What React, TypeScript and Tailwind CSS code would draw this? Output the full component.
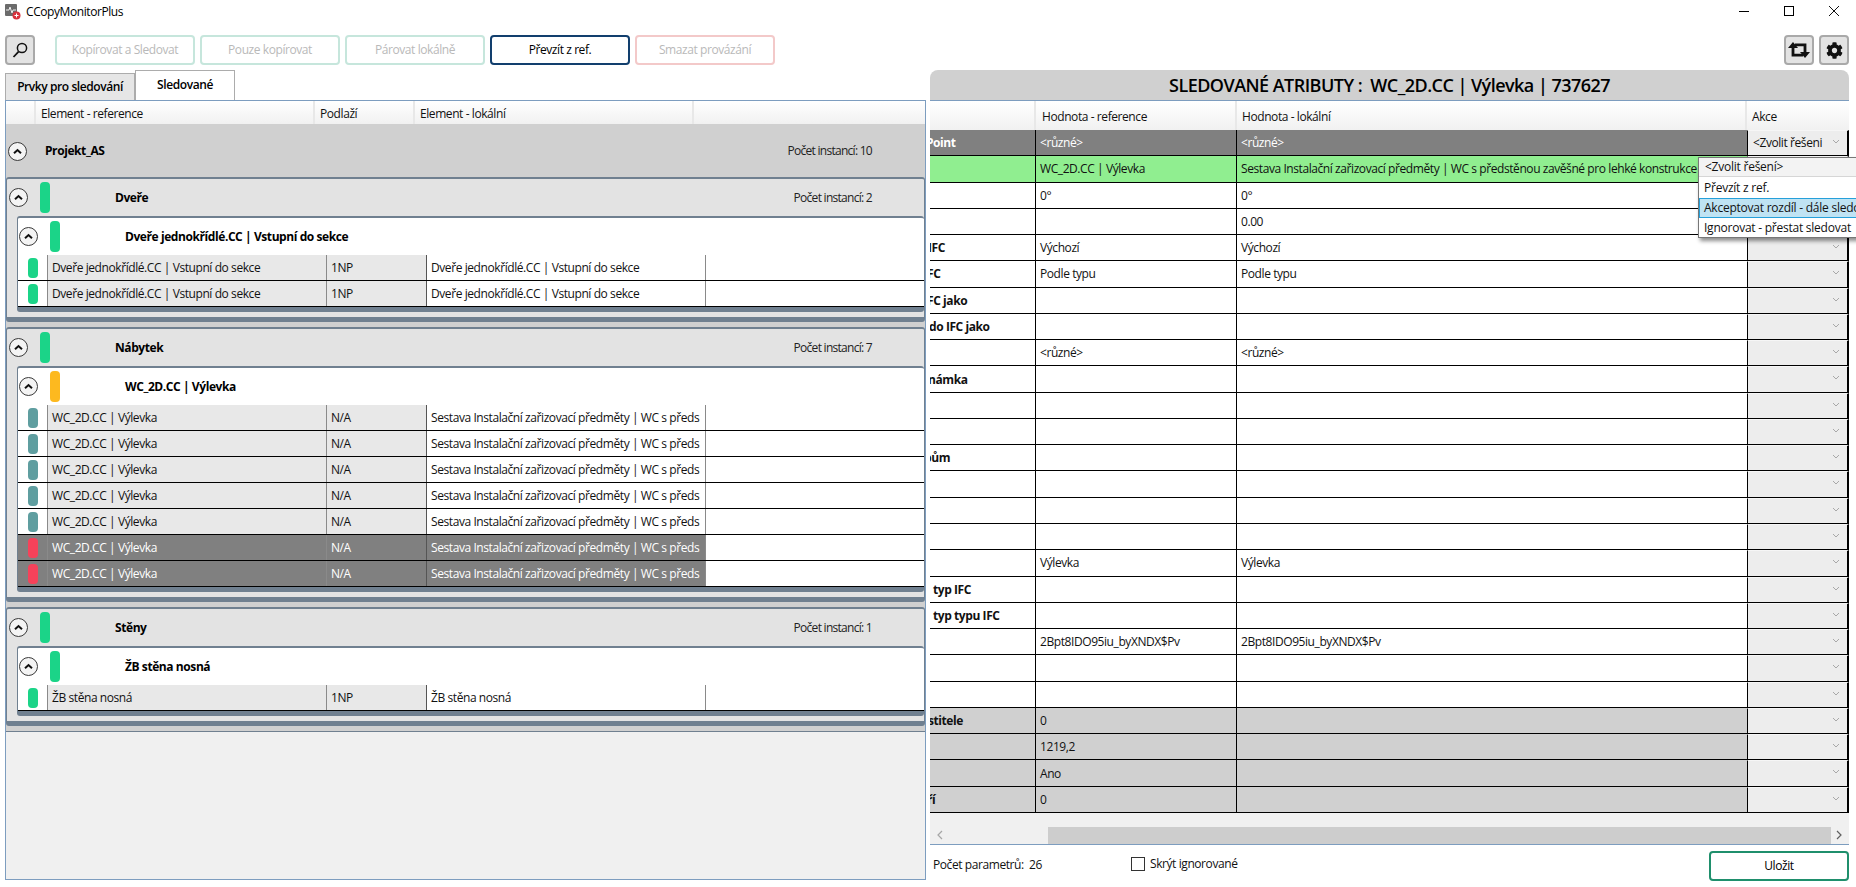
import { FaCog } from "react-icons/fa";

function CircleToggle() {
  return (
    <span className="flex h-[19px] w-[19px] shrink-0 items-center justify-center rounded-full border border-[#3a3a3a] bg-[#f4f4f4]">
      <svg width="9" height="7" viewBox="0 0 9 7">
        <path d="M1 5.2 L4.5 2 L8 5.2" fill="none" stroke="#111" strokeWidth="2" />
      </svg>
    </span>
  );
}

function Pill({ color, big }: { color: string; big?: boolean }) {
  return <span className={`block w-[10px] rounded-[4px] ${big ? "h-[31px]" : "h-[20px]"} ${color}`} />;
}

const GREEN = "bg-[#1bd488]";
const ORANGE = "bg-[#fdb91f]";
const TEAL = "bg-[#5f9ea0]";
const RED = "bg-[#f6425a]";

type Row = { pill: string; ref: string; level: string; local: string; dark?: boolean };

function ItemRow({ row }: { row: Row }) {
  const bg = row.dark ? "bg-[#808080] text-white" : "";
  const shade = row.dark ? "" : "bg-[#e8e8e8]";
  return (
    <div className="grid h-[26px] grid-cols-[29px_279px_100px_279px_1fr] border-b border-black">
      <div className={`flex items-center pl-[10px] ${bg}`}>
        <Pill color={row.pill} />
      </div>
      <div className={`flex items-center border-l border-[#8a8a8a] pl-[4px] ${bg} ${shade}`}>{row.ref}</div>
      <div className={`flex items-center border-l border-[#8a8a8a] pl-[4px] ${bg} ${shade}`}>{row.level}</div>
      <div className={`flex items-center overflow-hidden whitespace-nowrap border-l border-[#555] pl-[4px] ${bg}`}>{row.local}</div>
      <div className="border-l border-[#8a8a8a]" />
    </div>
  );
}

function Group({
  name,
  count,
  pill,
  item,
  itemPill,
  rows,
}: {
  name: string;
  count: string;
  pill: string;
  item: string;
  itemPill: string;
  rows: Row[];
}) {
  return (
    <div className="mb-[5px] rounded-[3px] border-x border-t-2 border-b-[5px] border-[#708090] bg-[#e3e3e3] pb-[5px]">
      <div className="flex h-[37px] items-center pl-[2px] pr-[52px]">
        <CircleToggle />
        <span className="ml-[12px]">
          <Pill color={pill} big />
        </span>
        <span className="ml-[65px] font-bold text-black">{name}</span>
        <span className="ml-auto tracking-[-0.06em] text-[#222]">{count}</span>
      </div>
      <div className="ml-[10px] rounded-[3px] border-l border-t-2 border-b-[5px] border-[#708090] bg-white">
        <div className="flex h-[37px] items-center pl-[1px]">
          <CircleToggle />
          <span className="ml-[12px]">
            <Pill color={itemPill} big />
          </span>
          <span className="ml-[65px] font-bold text-black">{item}</span>
        </div>
        {rows.map((r, i) => (
          <ItemRow key={i} row={r} />
        ))}
      </div>
    </div>
  );
}

const door = "Dveře jednokřídlé.CC | Vstupní do sekce";
const wc = "WC_2D.CC | Výlevka";
const wcLocal = "Sestava Instalační zařizovací předměty | WC s předs";

const toolbarButtons = [
  { label: "Kopírovat a Sledovat", cls: "border-[#c6e6dc] text-[#b9b9b9]" },
  { label: "Pouze kopírovat", cls: "border-[#c6e6dc] text-[#b9b9b9]" },
  { label: "Párovat lokálně", cls: "border-[#c6e6dc] text-[#b9b9b9]" },
  { label: "Převzít z ref.", cls: "border-[#123f6d] text-black" },
  { label: "Smazat provázání", cls: "border-[#f3c9c9] text-[#b9b9b9]" },
];

type Attr = { label?: string; labelCls?: string; a?: string; b?: string; bg?: string };

const attrs: Attr[] = [
  { label: "Point", labelCls: "ml-[-4px]", a: "<různé>", b: "<různé>", bg: "bg-[#808080] text-white" },
  { a: wc, b: "Sestava Instalační zařizovací předměty | WC s předstěnou zavěšné pro lehké konstrukce", bg: "bg-[#90ee90]" },
  { a: "0°", b: "0°" },
  { b: "0.00" },
  { label: "IFC", labelCls: "ml-[-2px]", a: "Výchozí", b: "Výchozí" },
  { label: "FC", labelCls: "ml-[-3px]", a: "Podle typu", b: "Podle typu" },
  { label: "FC jako", labelCls: "ml-[-3px]" },
  { label: "do IFC jako", labelCls: "ml-[-1px]" },
  { a: "<různé>", b: "<různé>" },
  { label: "námka", labelCls: "ml-[-2px]" },
  {},
  {},
  { label: "pům", labelCls: "ml-[-6px]" },
  {},
  {},
  {},
  { a: "Výlevka", b: "Výlevka" },
  { label: "typ IFC", labelCls: "ml-[3px]" },
  { label: "typ typu IFC", labelCls: "ml-[3px]" },
  { a: "2Bpt8IDO95iu_byXNDX$Pv", b: "2Bpt8IDO95iu_byXNDX$Pv" },
  {},
  {},
  { label: "stitele", labelCls: "ml-[-2px]", a: "0", bg: "bg-[#d0d0d0]" },
  { a: "1219,2", bg: "bg-[#d0d0d0]" },
  { a: "Ano", bg: "bg-[#d0d0d0]" },
  { label: "ří", labelCls: "ml-[-3px]", a: "0", bg: "bg-[#d0d0d0]" },
];

function ComboChevron() {
  return (
    <svg width="8" height="5" viewBox="0 0 8 5" className="absolute right-[7px] top-[8px]">
      <path d="M1 1 L4 4 L7 1" fill="none" stroke="#a8a8a8" strokeWidth="1" />
    </svg>
  );
}

export default function App() {
  return (
    <div className="relative flex h-[887px] w-[1856px] flex-col overflow-hidden bg-white font-['Open_Sans','Noto_Sans',sans-serif] text-[12px] tracking-[-0.035em] text-[#111]">
      {/* title bar */}
      <div className="flex h-[30px] items-start pl-[5px] pt-[4px]">
        <svg width="16" height="16" viewBox="0 0 16 16">
          <rect x="0" y="0" width="12" height="12" rx="1" fill="#6b6b6b" />
          <path d="M1 6 H4 L5 3 L7 9 L8 6 H11" fill="none" stroke="#eee" strokeWidth="1" />
          <circle cx="11.5" cy="11.5" r="4" fill="#d8313c" />
          <path d="M9.5 11.5 H13.5 M11.5 9.5 V13.5" stroke="#fff" strokeWidth="1" />
        </svg>
        <span className="ml-[5px] text-[12px] leading-[16px] text-black">CCopyMonitorPlus</span>
        <div className="ml-auto mr-[17px] mt-[2px] flex items-start gap-[35px]">
          <span className="mt-[5px] block h-px w-[10px] bg-black" />
          <span className="block h-[10px] w-[10px] border border-black" />
          <svg width="10" height="10" viewBox="0 0 10 10">
            <path d="M0 0 L10 10 M10 0 L0 10" stroke="#111" strokeWidth="1" />
          </svg>
        </div>
      </div>

      {/* toolbar */}
      <div className="mt-[5px] flex h-[30px] px-[5px]">
        <button className="flex h-[30px] w-[30px] items-center justify-center rounded-[4px] border-2 border-[#a9a9a9] bg-[#e3e3e3]">
          <svg width="16" height="16" viewBox="0 0 16 16">
            <circle cx="10" cy="6" r="4.6" fill="none" stroke="#111" strokeWidth="1.5" />
            <path d="M6.6 9.6 L1.5 15" stroke="#111" strokeWidth="1.8" />
          </svg>
        </button>
        <div className="ml-[20px] flex gap-[5px]">
          {toolbarButtons.map((b) => (
            <button key={b.label} className={`h-[30px] w-[140px] rounded-[4px] border-2 bg-white ${b.cls}`}>
              {b.label}
            </button>
          ))}
        </div>
        <div className="ml-auto mr-[2px] flex gap-[5px]">
          <button className="flex h-[30px] w-[30px] items-center justify-center rounded-[4px] border-2 border-[#a9a9a9] bg-[#e3e3e3]">
            <svg width="22" height="16" viewBox="0 0 22 16">
              <path d="M5 0 L10 6 H6.4 V11.8 H15 V14.4 H3.6 V6 H0 Z" fill="#111" />
              <path d="M17 16 L12 10 H15.6 V4.2 H7 V1.6 H18.4 V10 H22 Z" fill="#111" />
            </svg>
          </button>
          <button className="flex h-[30px] w-[30px] items-center justify-center rounded-[4px] border-2 border-[#a9a9a9] bg-[#e3e3e3]">
            <FaCog size={17} color="#111" />
          </button>
        </div>
      </div>

      <div className="mt-[5px] flex flex-1 pl-[5px]">
        {/* left side */}
        <div className="w-[921px]">
          <div className="flex h-[30px] items-end">
            <div className="flex h-[27px] w-[130px] items-center justify-center border border-b-0 border-[#acacac] bg-[#e6e6e6] font-semibold text-black">
              Prvky pro sledování
            </div>
            <div className="flex h-[30px] w-[100px] items-center justify-center border border-b-0 border-[#acacac] bg-white pb-[2px] font-semibold text-black">
              Sledované
            </div>
          </div>
          <div className="h-[780px] border border-[#7d9dbf] bg-[#f0f0f0]">
            <div className="grid h-[23px] grid-cols-[30px_279px_100px_279px_1fr] bg-gradient-to-b from-white to-[#f1f1f1]">
              <div className="border-r-2 border-[#e8e8e8]" />
              <div className="flex items-center border-r-2 border-[#e8e8e8] pl-[5px] pt-[2px]">Element - reference</div>
              <div className="flex items-center border-r-2 border-[#e8e8e8] pl-[5px] pt-[2px]">Podlaží</div>
              <div className="flex items-center border-r-2 border-[#e8e8e8] pl-[5px] pt-[2px]">Element - lokální</div>
              <div />
            </div>
            <div className="border-b border-[#708090] bg-[#d0d0d0]">
              <div className="flex h-[53px] items-center pl-[2px] pr-[53px] pt-[1px]">
                <CircleToggle />
                <span className="ml-[18px] font-bold text-black">Projekt_AS</span>
                <span className="ml-auto tracking-[-0.06em] text-[#222]">Počet instancí: 10</span>
              </div>
              <Group
                name="Dveře"
                count="Počet instancí: 2"
                pill={GREEN}
                item={door}
                itemPill={GREEN}
                rows={[
                  { pill: GREEN, ref: door, level: "1NP", local: door },
                  { pill: GREEN, ref: door, level: "1NP", local: door },
                ]}
              />
              <Group
                name="Nábytek"
                count="Počet instancí: 7"
                pill={GREEN}
                item={wc}
                itemPill={ORANGE}
                rows={[
                  { pill: TEAL, ref: wc, level: "N/A", local: wcLocal },
                  { pill: TEAL, ref: wc, level: "N/A", local: wcLocal },
                  { pill: TEAL, ref: wc, level: "N/A", local: wcLocal },
                  { pill: TEAL, ref: wc, level: "N/A", local: wcLocal },
                  { pill: TEAL, ref: wc, level: "N/A", local: wcLocal },
                  { pill: RED, ref: wc, level: "N/A", local: wcLocal, dark: true },
                  { pill: RED, ref: wc, level: "N/A", local: wcLocal, dark: true },
                ]}
              />
              <Group
                name="Stěny"
                count="Počet instancí: 1"
                pill={GREEN}
                item="ŽB stěna nosná"
                itemPill={GREEN}
                rows={[{ pill: GREEN, ref: "ŽB stěna nosná", level: "1NP", local: "ŽB stěna nosná" }]}
              />
            </div>
          </div>
        </div>

        {/* right side */}
        <div className="ml-[4px] w-[919px]">
          <div className="flex h-[30px] items-center justify-center rounded-t-[8px] bg-[#d0d0d0] text-[18px] font-semibold tracking-[-0.03em] text-black">
            SLEDOVANÉ ATRIBUTY :&nbsp; WC_2D.CC | Výlevka | 737627
          </div>
          <div className="h-[745px] overflow-hidden border-y border-[#7d9dbf]">
            <div className="grid h-[29px] grid-cols-[106px_201px_510px_1fr] bg-gradient-to-b from-white to-[#f1f1f1]">
              <div className="border-r-2 border-[#e8e8e8]" />
              <div className="flex items-center border-r-2 border-[#e8e8e8] pl-[6px] pt-[2px]">Hodnota - reference</div>
              <div className="flex items-center border-r-2 border-[#e8e8e8] pl-[5px] pt-[2px]">Hodnota - lokální</div>
              <div className="flex items-center pl-[5px] pt-[2px]">Akce</div>
            </div>
            {attrs.map((row, i) => (
              <div key={i} className="grid h-[26.27px] grid-cols-[106px_201px_510px_1fr] border-b border-black">
                <div className={`flex items-center overflow-hidden whitespace-nowrap border-r border-black pt-[1px] font-bold ${row.bg ?? ""}`}>
                  <span className={row.labelCls}>{row.label}</span>
                </div>
                <div className={`flex items-center overflow-hidden whitespace-nowrap border-r border-black pl-[4px] pt-[1px] ${row.bg ?? ""}`}>{row.a}</div>
                <div className={`flex items-center overflow-hidden whitespace-nowrap pl-[4px] pt-[1px] ${row.bg ?? ""}`}>{row.b}</div>
                <div className="relative flex items-center border-l border-r-2 border-t border-black border-t-[#f6f6f6] bg-[#ededed] pl-[5px] text-[#111]">
                  {i === 0 && "<Zvolit řešeni"}
                  <ComboChevron />
                </div>
              </div>
            ))}
            <div className="h-[14px] bg-[#f0f0f0]" />
            <div className="flex h-[17px] bg-[#f0f0f0]">
              <div className="flex w-[118px] items-center pl-[7px]">
                <svg width="6" height="10" viewBox="0 0 6 10">
                  <path d="M5 1 L1 5 L5 9" fill="none" stroke="#a6a6a6" strokeWidth="1.2" />
                </svg>
              </div>
              <div className="w-[783px] bg-[#cdcdcd]" />
              <div className="flex flex-1 items-center pl-[5px]">
                <svg width="6" height="10" viewBox="0 0 6 10">
                  <path d="M1 1 L5 5 L1 9" fill="none" stroke="#606060" strokeWidth="1.2" />
                </svg>
              </div>
            </div>
          </div>
          <div className="flex h-[36px] items-center pl-[3px]">
            <span className="w-[198px] whitespace-pre pt-[4px]">Počet parametrů:  26</span>
            <span className="mt-[2px] block h-[14px] w-[14px] border border-[#333] bg-white" />
            <span className="ml-[5px] mt-[1px]">Skrýt ignorované</span>
            <button className="ml-auto mt-[5px] h-[30px] w-[140px] rounded-[4px] border-2 border-[#1f8f6c] bg-white text-black">
              Uložit
            </button>
          </div>
        </div>
      </div>

      {/* open dropdown */}
      <div className="absolute left-[1698px] top-[157px] w-[175px] border border-[#777] bg-white tracking-[-0.02em] shadow-[2px_3px_4px_rgba(0,0,0,0.45)]">
        <div className="flex h-[19px] items-center border-b border-[#d6d6d6] bg-[#f3f3f3] pl-[6px]">&lt;Zvolit řešení&gt;</div>
        <div className="flex h-[21px] items-center pl-[5px]">Převzít z ref.</div>
        <div className="flex h-[20px] items-center whitespace-nowrap border border-[#26a0da] bg-[#bfe3f3] pl-[4px]">Akceptovat rozdíl - dále sledovat</div>
        <div className="flex h-[19px] items-center pl-[5px]">Ignorovat - přestat sledovat</div>
      </div>
    </div>
  );
}
